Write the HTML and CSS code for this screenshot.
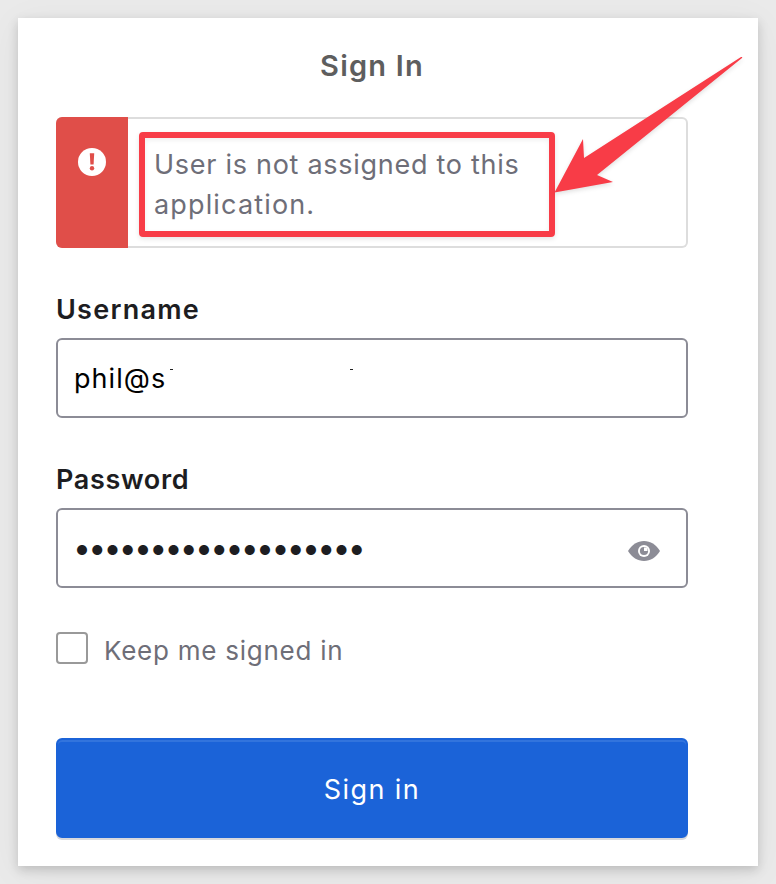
FILE: index.html
```html
<!DOCTYPE html>
<html lang="en">
<head>
<meta charset="utf-8">
<title>Sign In</title>
<link rel="stylesheet" href="styles.css">
</head>
<body>
<main class="card">
  <h1 class="title"><span>Sign In</span></h1>
  <div class="alert">
    <div class="alert-side">
      <svg width="28" height="28" viewBox="0 0 28 28"><circle cx="14" cy="14" r="14" fill="#fff"/><path d="M11.8 5.3h4.4l-.6 11.2h-3.2z" fill="#e04e49"/><circle cx="14" cy="20.3" r="2.2" fill="#e04e49"/></svg>
    </div>
    <p class="alert-text"><span class="line1">User is not assigned to this</span><br><span class="line2">application.</span></p>
    <div class="highlight"></div>
    <svg class="arrow" width="200" height="150" viewBox="0 0 200 150"><path d="M10.500 141.500 39 88l1 19L197 6q2-.5 1 1L53 124l16 7z" fill="#f83c47"/></svg>
  </div>
  <label class="label username"><span>Username</span></label>
  <div class="field">
    <span class="email">phil@s</span>
    <i class="speck speck-a"></i>
    <i class="speck speck-b"></i>
  </div>
  <label class="label password"><span>Password</span></label>
  <div class="field">
    <span class="dots">•••••••••••••••••••</span>
    <svg class="eye" width="32" height="20" viewBox="0 0 32 20"><path d="M0 10C4 3.500 9.500 0 16 0s12 3.500 16 10c-4 6.500-9.500 10-16 10S4 16.500 0 10z" fill="#8c8c96"/><circle cx="16" cy="10" r="6" fill="#fff"/><circle cx="16" cy="10" r="4.100" fill="#8c8c96"/><path d="M16 6.500h3.500V10H16z" fill="#fff"/></svg>
  </div>
  <div class="remember"><span class="box"></span><span class="keep">Keep me signed in</span></div>
  <button class="submit"><span>Sign in</span></button>
</main>
</body>
</html>
```
FILE: styles.css
```css
* { box-sizing: border-box; }
body {
  margin: 0;
  height: 884px;
  padding: 18px;
  overflow: hidden;
  background: #eaeaea;
  font-family: Inter, "Liberation Sans", sans-serif;
}
.card {
  width: 740px;
  height: 848px;
  padding: 28px 70px 0 38px;
  background: #fff;
  box-shadow: 0 4px 10px rgba(0, 0, 0, .17), 0 6px 36px rgba(0, 0, 0, .05);
}
.title {
  margin: 0;
  height: 40px;
  line-height: 40px;
  text-align: center;
  font-size: 29px;
  font-weight: 600;
  letter-spacing: 1.2px;
  color: #5e5e5e;
}
.alert {
  position: relative;
  display: flex;
  height: 131px;
  margin-top: 31px;
  border: 2px solid #ddd;
  border-left: 0;
  border-radius: 6px;
}
.alert-side {
  width: 72px;
  margin: -2px 0;
  padding-top: 31px;
  text-align: center;
  background: #e04e49;
  border-radius: 6px 0 0 6px;
}
.alert-text {
  margin: 26px 0 0 26px;
  font-size: 27px;
  line-height: 40px;
  color: #6e6e78;
  white-space: nowrap;
}
.line1 { letter-spacing: .72px; }
.line2 { letter-spacing: 1.15px; }
.highlight {
  position: absolute;
  left: 83px;
  top: 13px;
  width: 416px;
  height: 105px;
  border: 6px solid #f83c47;
  border-radius: 4px;
  box-shadow: 0 2px 5px rgba(0, 0, 0, .1), inset 0 2px 5px rgba(0, 0, 0, .07);
}
.arrow {
  position: absolute;
  left: 488px;
  top: -68px;
  filter: drop-shadow(0 2px 2px rgba(0, 0, 0, .12));
}
.label {
  display: block;
  height: 36px;
  line-height: 38px;
  font-size: 27px;
  font-weight: 600;
  color: #1d1d21;
}
.username { margin-top: 43px; letter-spacing: 1.25px; }
.password { margin-top: 43px; letter-spacing: .65px; }
.field {
  position: relative;
  display: flex;
  align-items: center;
  height: 80px;
  margin-top: 11px;
  padding: 0 26px 0 16px;
  border: 2px solid #8c8c96;
  border-radius: 6px;
}
.email {
  padding-top: 2px;
  font-size: 27px;
  line-height: 40px;
  letter-spacing: 1.05px;
  white-space: nowrap;
  color: #000;
}
.speck {
  position: absolute;
  top: 29px;
  width: 3px;
  height: 1px;
  background: #222;
}
.speck-a { left: 112px; }
.speck-b { left: 292px; }
.dots {
  margin-left: -1px;
  font-size: 32px;
  line-height: 40px;
  letter-spacing: -2.74px;
  color: #1d1d21;
  white-space: nowrap;
}
.eye { margin: 5px 0 0 auto; }
.remember {
  display: flex;
  margin-top: 44px;
  height: 36px;
}
.box {
  width: 32px;
  height: 32px;
  border: 2px solid #999;
  border-radius: 4px;
}
.keep {
  margin-left: 16px;
  font-size: 26px;
  line-height: 38px;
  letter-spacing: .75px;
  color: #6e6e78;
}
.submit {
  display: block;
  width: 632px;
  height: 100px;
  margin-top: 70px;
  padding: 2px 0 0;
  border: 2px solid #1b63d8;
  border-radius: 6px;
  background: #1b63d8;
  box-shadow: 0 2px 0 #d9d9dd, inset 0 2px 0 #3274dd;
  color: #fff;
  font: 27px Inter, "Liberation Sans", sans-serif;
  letter-spacing: 1.4px;
}
```
